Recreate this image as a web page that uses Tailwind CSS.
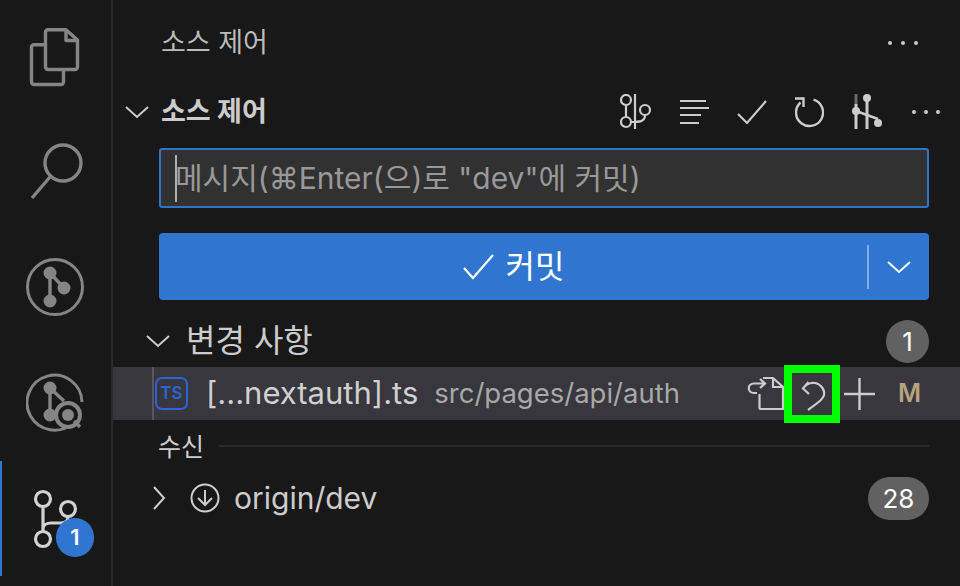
<!DOCTYPE html>
<html lang="ko">
<head>
    <meta charset="UTF-8">
    <title>소스 제어</title>
    <script src="https://cdn.jsdelivr.net/npm/@tailwindcss/browser@4"></script>
</head>
<body class="w-[960px] h-[586px] overflow-hidden bg-[#181818] text-[#cccccc] font-['Inter','Noto_Sans_CJK_KR',sans-serif] flex">

    <!-- Activity bar -->
    <nav class="w-[113px] h-full shrink-0 border-r-2 border-[#2b2b2b] relative flex flex-col items-center text-[#858585]">
        <svg class="mt-[26px] ml-[1px]" width="56" height="62" viewBox="0 0 56 62" fill="none" stroke="currentColor" stroke-width="3.4" stroke-linejoin="round">
            <path d="M17 18.7H6a2.5 2.5 0 0 0-2.5 2.5V56a2.5 2.5 0 0 0 2.5 2.5H33a2.5 2.5 0 0 0 2.5-2.5V44"/>
            <path d="M20 3.7H38L49.5 14V41a2.5 2.5 0 0 1-2.5 2.5H20a2.5 2.5 0 0 1-2.5-2.5V6.2a2.5 2.5 0 0 1 2.5-2.5z"/>
            <path d="M38 3.7V14.5H49.5"/>
        </svg>
        <svg class="mt-[53px] ml-[5px]" width="56" height="60" viewBox="0 0 56 60" fill="none" stroke="currentColor" stroke-width="3.4">
            <circle cx="33" cy="22" r="18"/>
            <path d="M20 36L2 57"/>
        </svg>
        <svg class="mt-[56px]" width="60" height="60" viewBox="0 0 60 60" fill="none" stroke="currentColor" stroke-width="3">
            <circle cx="29" cy="30" r="27.5"/>
            <path d="M24 16V44M24 16L37 30" stroke-width="3.4"/>
            <circle cx="24" cy="16" r="5" fill="currentColor"/>
            <circle cx="38" cy="31" r="5" fill="currentColor"/>
            <circle cx="24" cy="44" r="5" fill="currentColor"/>
        </svg>
        <svg class="mt-[55px]" width="60" height="60" viewBox="0 0 60 60" fill="none" stroke="currentColor" stroke-width="3">
            <path d="M47 51A27.5 27.5 0 1 1 56 30"/>
            <path d="M24 16V43M24 16L38 29" stroke-width="3.4"/>
            <circle cx="24" cy="16" r="5" fill="currentColor"/>
            <circle cx="24" cy="43" r="5" fill="currentColor"/>
            <circle cx="42" cy="43" r="12" fill="#181818" stroke-width="4"/>
            <circle cx="42" cy="43" r="6" fill="currentColor" stroke="none"/>
            <path d="M48 49L54 55" stroke-width="3.4"/>
        </svg>
        <span class="absolute left-0 top-[461px] w-[2px] h-[115px] bg-[#3076d0]"></span>
        <svg class="absolute left-[33px] top-[489px]" width="46" height="60" viewBox="0 0 46 60" fill="none" stroke="#d2d2d2" stroke-width="3.2">
            <circle cx="10" cy="10" r="7.5"/>
            <circle cx="10" cy="50" r="7.5"/>
            <circle cx="35" cy="20" r="7.5"/>
            <path d="M10 18V42M10 40C10 36 14 34 18 34H28C33 34 35 32 35 28"/>
        </svg>
        <span class="absolute left-[56px] top-[518px] w-[38px] h-[39px] rounded-full bg-[#3076d0] text-white text-[22px] font-semibold flex items-center justify-center">1</span>
    </nav>

    <main class="flex-1 min-w-0 flex flex-col">
        <!-- View title -->
        <header class="h-[88px] shrink-0 flex items-center pl-[48px] pr-[42px] pb-[2px]">
            <span class="text-[27px] text-[#bbbbbb]">소스 제어</span>
            <span class="ml-auto flex gap-[9px]">
                <i class="w-[4px] h-[4px] rounded-full bg-[#cccccc]"></i><i class="w-[4px] h-[4px] rounded-full bg-[#cccccc]"></i><i class="w-[4px] h-[4px] rounded-full bg-[#cccccc]"></i>
            </span>
        </header>

        <!-- Section header -->
        <div class="h-[46px] shrink-0 flex items-center pl-[12px] pr-[20px] mt-[1px]">
            <svg width="24" height="14" viewBox="0 0 24 14" fill="none" stroke="#cccccc" stroke-width="2"><path d="M1 2l11 10L23 2"/></svg>
            <span class="ml-[12px] text-[27px] font-bold text-[#cccccc]">소스 제어</span>
            <div class="ml-auto flex items-center text-[#cccccc]">
                <svg width="32" height="36" viewBox="0 0 32 36" fill="none" stroke="currentColor" stroke-width="2.2">
                    <circle cx="6" cy="6" r="5"/><circle cx="6" cy="28" r="5"/><circle cx="25" cy="16" r="5"/>
                    <path d="M6 11V23M15 0V35M25 21C25 28 19 28 11 28"/>
                </svg>
                <svg class="ml-[28px]" width="29" height="26" viewBox="0 0 29 26" fill="none" stroke="currentColor" stroke-width="2.2">
                    <path d="M0 2H26M0 9H29M0 16H21M0 24H19"/>
                </svg>
                <svg class="ml-[28px]" width="30" height="26" viewBox="0 0 30 26" fill="none" stroke="currentColor" stroke-width="2.2"><path d="M1 15l9 9L29 2"/></svg>
                <svg class="ml-[28px]" width="29" height="31" viewBox="0 0 29 31" fill="none" stroke="currentColor" stroke-width="2.4">
                    <path d="M18.5 2.6A13.5 13.5 0 1 1 5.5 5.5M0 1.5H8.5V10"/>
                </svg>
                <svg class="ml-[28px]" width="31" height="36" viewBox="0 0 31 36" fill="none" stroke="currentColor" stroke-width="3">
                    <path d="M4 10V35M15 1V35"/><path d="M4 0V10" stroke="#6a6a6a"/><path d="M4 17L26 25" stroke-width="2.6"/>
                    <circle cx="4" cy="17" r="4" fill="currentColor" stroke="none"/><circle cx="15" cy="4" r="4" fill="currentColor" stroke="none"/><circle cx="26" cy="29" r="4" fill="currentColor" stroke="none"/>
                </svg>
                <span class="ml-[29px] flex gap-[8px]">
                    <i class="w-[4px] h-[4px] rounded-full bg-[#cccccc]"></i><i class="w-[4px] h-[4px] rounded-full bg-[#cccccc]"></i><i class="w-[4px] h-[4px] rounded-full bg-[#cccccc]"></i>
                </span>
            </div>
        </div>

        <!-- Commit input -->
        <div class="ml-[46px] mr-[31px] mt-[13px] h-[60px] shrink-0 rounded-[3px] border-2 border-[#2f74c8] bg-[#313131] flex items-center pl-[14px] pt-[1px] text-[30px] text-[#989898] relative whitespace-nowrap">
            <span class="absolute left-[14px] top-[5px] w-[2px] h-[47px] bg-[#aeaeae]"></span>
            <span>메시지(⌘Enter(으)로 "dev"에 커밋)</span>
        </div>

        <!-- Commit button -->
        <div class="ml-[46px] mr-[31px] mt-[25px] h-[67px] shrink-0 rounded-[4px] bg-[#3076d0] flex items-center text-white">
            <div class="flex-1 flex items-center justify-center gap-[12px] pl-[1px] text-[32px]">
                <svg width="31" height="28" viewBox="0 0 31 28" fill="none" stroke="#ffffff" stroke-width="2.2"><path d="M1 15l9 10L30 2"/></svg>
                <span>커밋</span>
            </div>
            <span class="w-[2px] h-[44px] bg-white/40"></span>
            <svg class="mx-[18px]" width="24" height="14" viewBox="0 0 24 14" fill="none" stroke="#ffffff" stroke-width="2"><path d="M1 2l11 10L23 2"/></svg>
        </div>

        <!-- Changes group -->
        <div class="h-[48px] mt-[19px] shrink-0 flex items-center pl-[33px] pr-[31px] -translate-y-[2px]">
            <svg width="24" height="14" viewBox="0 0 24 14" fill="none" stroke="#cccccc" stroke-width="2"><path d="M1 2l11 10L23 2"/></svg>
            <span class="ml-[16px] text-[32px] text-[#cccccc]">변경 사항</span>
            <span class="ml-auto w-[43px] h-[43px] rounded-full bg-[#616161] text-white text-[26px] flex items-center justify-center">1</span>
        </div>

        <!-- Selected row -->
        <div class="h-[53px] shrink-0 bg-[#37373d] flex items-center relative pl-[42px] pr-[39px]">
            <span class="absolute left-[39px] top-0 w-[2px] h-full bg-[#58585c]"></span>
            <span class="w-[33px] h-[33px] rounded-[7px] border-2 border-[#2f62d8] text-[#2f62d8] text-[17px] font-semibold flex items-center justify-center">TS</span>
            <span class="ml-[18px] text-[31px] text-[#d0d0d0] whitespace-nowrap">[...nextauth].ts</span>
            <span class="ml-[16px] text-[27.5px] text-[#a8a8a8] whitespace-nowrap">src/pages/api/auth</span>
            <div class="ml-auto flex items-center">
                <svg width="38" height="36" viewBox="0 0 38 36" fill="none" stroke="#cccccc" stroke-width="2.2">
                    <path d="M16 2H26L36 11V33H14Q12.5 33 12.5 31.5V18M26 2V11H36"/>
                    <path d="M13 3L18 7.5L13 12M18 7.5H7C0 7.5 0 17 7 17H10"/>
                </svg>
                <span class="w-[56px] h-[58px] -my-[3px] ml-[-1px] shrink-0 border-[8px] border-[#00ff00]">
                    <svg width="40" height="42" viewBox="0 0 40 42" fill="none" stroke="#cccccc" stroke-width="2.2">
                        <path d="M16.5 9L11 15.5L17 21M11 15.5C14 11 19 9.5 23 10C29 11 33 17 32 22C31 26 28 28 16 37"/>
                    </svg>
                </span>
                <svg class="ml-[4px]" width="31" height="32" viewBox="0 0 31 32" fill="none" stroke="#cccccc" stroke-width="2.4"><path d="M15.5 0V32M0 16H31"/></svg>
                <span class="ml-[23px] w-[23px] text-center text-[25px] font-semibold text-[#b8a37e]">M</span>
            </div>
        </div>

        <!-- Incoming -->
        <div class="h-[56px] shrink-0 flex items-center pl-[45px] pr-[31px]">
            <span class="text-[25px] text-[#cccccc]">수신</span>
            <span class="ml-[15px] flex-1 h-[2px] bg-[#2b2b2b] -translate-y-[2px]"></span>
        </div>
        <div class="h-[44px] shrink-0 flex items-center pl-[39px] pr-[31px]">
            <svg width="14" height="26" viewBox="0 0 14 26" fill="none" stroke="#cccccc" stroke-width="2"><path d="M2 2l10 11L2 24"/></svg>
            <svg class="ml-[24px]" width="30" height="30" viewBox="0 0 30 30" fill="none" stroke="#cccccc" stroke-width="2"><circle cx="15" cy="15" r="13.5"/><path d="M15 7V22M8 15l7 7 7-7"/></svg>
            <span class="ml-[14px] text-[30px] text-[#cccccc]">origin/dev</span>
            <span class="ml-auto w-[61px] h-[43px] rounded-full bg-[#616161] text-white text-[26px] flex items-center justify-center">28</span>
        </div>
    </main>
</body>
</html>
